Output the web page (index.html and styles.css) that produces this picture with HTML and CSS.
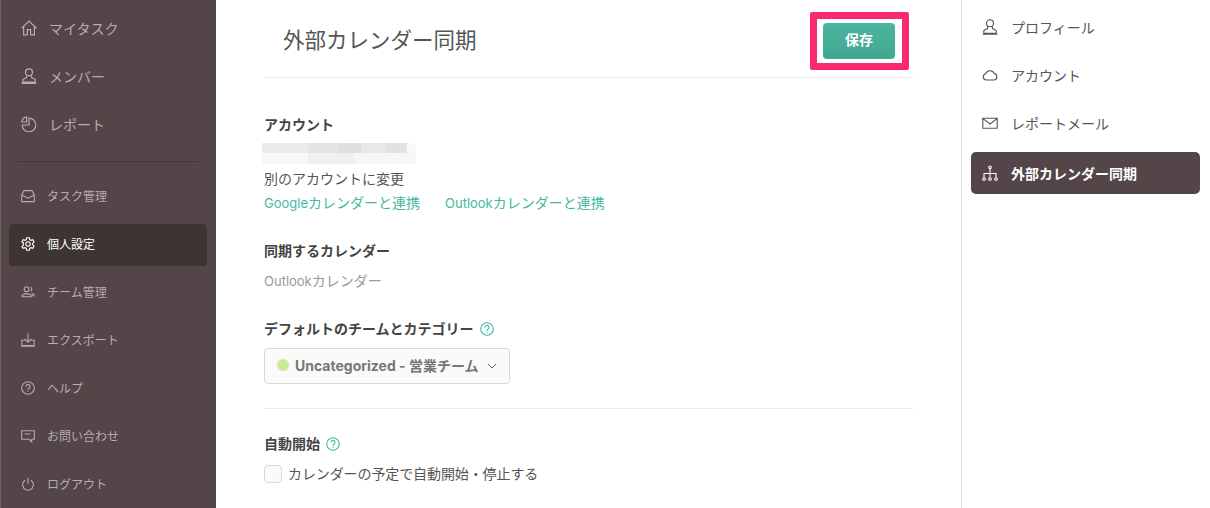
FILE: index.html
```html
<!DOCTYPE html>
<html lang="ja">
<head>
<meta charset="utf-8">
<title>外部カレンダー同期</title>
<link rel="stylesheet" href="styles.css">
</head>
<body>
<div class="app">
  <nav class="sidebar">
    <ul class="nav-main">
      <li class="nav-item"><svg class="ico-l" viewBox="0 0 16 16"><path d="M.6 8.300 8 1l7.400 7.300M2.600 6.800v8h3.800V9.600h3.200v5.200h3.800v-8"/></svg>マイタスク</li>
      <li class="nav-item"><svg class="ico-l" viewBox="0 0 16 16"><circle cx="8" cy="4.300" r="3.500"/><path d="M5.800 7.400 5.400 9.600 1.800 11.600v2.600h12.400v-2.600l-3.600-2-.4-2.200M.6 15.300h14.800"/></svg>メンバー</li>
      <li class="nav-item"><svg class="ico-l" viewBox="0 0 16 16"><path d="M8 2.200a6.800 6.800 0 1 1-6.800 6.800H8zM5.600.8A5.800 5.800 0 0 0 .8 6h4.800z"/></svg>レポート</li>
    </ul>
    <hr class="nav-rule">
    <ul class="nav-sub">
      <li class="sub-item"><svg class="ico-s" viewBox="0 0 14 14"><path d="M.7 6 3 1.600h8L13.300 6v6.600H.7zM.7 6 7 9.200 13.300 6"/></svg>タスク管理</li>
      <li class="sub-item active"><svg class="ico-s" viewBox="0 0 14 14"><circle cx="7" cy="7" r="2.200"/><path d="M5.700.8h2.600l.4 1.800 1.300.7 1.800-.6 1.300 2.300-1.400 1.200v1.600l1.400 1.200-1.300 2.300-1.800-.6-1.300.7-.4 1.800H5.700l-.4-1.800-1.300-.7-1.800.6L.9 9.700 2.300 8.500V5.500L.9 5l1.300-2.300 1.800.6 1.300-.7z"/></svg>個人設定</li>
      <li class="sub-item"><svg class="ico-s" viewBox="0 0 14 14"><circle cx="5.600" cy="4.200" r="2.400"/><path d="M1 11.800V10.300l2.700-1.400h3.800l2.700 1.400v1.500zM9.600 2.300a2.200 2.200 0 0 1 0 3.900M10.600 8.200l2.400 1.300v1.300h-2"/></svg>チーム管理</li>
      <li class="sub-item"><svg class="ico-s" viewBox="0 0 14 14"><path d="M7 .4v8.600M3.600 5.800 7 9.200l3.400-3.400M3.800 7.200H.8v6h12.400v-6h-3M.8 12.500h12.400"/></svg>エクスポート</li>
      <li class="sub-item"><svg class="ico-s" viewBox="0 0 14 14"><circle cx="7" cy="7" r="6.300"/><path d="M5 5.400a2 2 0 1 1 3.200 1.600C7.400 7.600 7 8 7 9M7 10v.9"/></svg>ヘルプ</li>
      <li class="sub-item"><svg class="ico-s" viewBox="0 0 14 14"><path d="M.7 1.700h12.600v8.600h-2.600v2.500l-2.500-2.500H.7zM3.500 5h6"/></svg>お問い合わせ</li>
      <li class="sub-item"><svg class="ico-s" viewBox="0 0 14 14"><path d="M4.200 3.200a5.400 5.400 0 1 0 5.600 0M7 .8v6"/></svg>ログアウト</li>
    </ul>
  </nav>

  <main class="main">
    <header class="page-head">
      <h1 class="page-title">外部カレンダー同期</h1>
      <button class="save-btn">保存</button>
      <span class="annot"></span>
    </header>

    <section class="block-account">
      <h2 class="label">アカウント</h2>
      <div class="blur"></div>
      <p class="line">別のアカウントに変更</p>
      <p class="links"><a class="link"><span class="lat">Google</span>カレンダーと連携</a><a class="link"><span class="lat">Outlook</span>カレンダーと連携</a></p>
    </section>

    <section class="block-cal">
      <h2 class="label">同期するカレンダー</h2>
      <p class="muted"><span class="lat">Outlook</span>カレンダー</p>
    </section>

    <section class="block-default">
      <h2 class="label">デフォルトのチームとカテゴリー<svg class="help" viewBox="0 0 14 14"><circle cx="7" cy="7" r="6.300"/><path d="M5 5.400a2 2 0 1 1 3.200 1.600C7.400 7.600 7 8 7 9M7 10v.9"/></svg></h2>
      <div class="select"><span class="dot"></span><span class="select-text">Uncategorized - 営業チーム</span><svg class="chev" viewBox="0 0 10 6"><path d="M.8.8 5 5 9.200.8"/></svg></div>
    </section>

    <hr class="rule">

    <section class="block-auto">
      <h2 class="label">自動開始<svg class="help" viewBox="0 0 14 14"><circle cx="7" cy="7" r="6.300"/><path d="M5 5.400a2 2 0 1 1 3.200 1.600C7.400 7.600 7 8 7 9M7 10v.9"/></svg></h2>
      <label class="check"><span class="box"></span><span class="check-text">カレンダーの予定で自動開始・停止する</span></label>
    </section>
  </main>

  <aside class="side">
    <ul class="side-list">
      <li class="side-item"><svg class="ico-r" viewBox="0 0 16 16"><circle cx="8" cy="4.300" r="3.500"/><path d="M5.800 7.400 5.400 9.600 1.800 11.600v2.600h12.400v-2.600l-3.600-2-.4-2.200M.6 15.300h14.800"/></svg>プロフィール</li>
      <li class="side-item"><svg class="ico-r" viewBox="0 0 16 16"><path d="M4.300 13A3.200 3.200 0 0 1 3.700 6.700 4.600 4.600 0 0 1 12.300 6.600 3.250 3.250 0 0 1 12 13z"/></svg>アカウント</li>
      <li class="side-item"><svg class="ico-r" viewBox="0 0 16 16"><path d="M.8 3.200h14.400v10H.8zM1 3.600 8 9l7-5.400"/></svg>レポートメール</li>
      <li class="side-item current"><svg class="ico-r" viewBox="0 0 16 16"><circle cx="8" cy="2.300" r="1.300"/><circle cx="2" cy="14" r="1.300"/><circle cx="8" cy="14" r="1.300"/><circle cx="14" cy="14" r="1.300"/><path d="M8 3.600v8.900M2 12.700V8.500h12v4.200"/></svg>外部カレンダー同期</li>
    </ul>
  </aside>
</div>
</body>
</html>
```

FILE: styles.css
```css
* { box-sizing: border-box; }
html, body { margin: 0; padding: 0; height: 100%; overflow: hidden; }
body {
  font-family: Inter, "Noto Sans CJK JP", sans-serif;
  color: #4a4a4a;
  background: #fff;
}
ul { list-style: none; margin: 0; padding: 0; }
p, h1, h2 { margin: 0; }

.app { display: flex; width: 1210px; height: 508px; }

/* left sidebar */
.sidebar {
  width: 216px;
  flex: none;
  background: #534548;
  border-left: 1px solid #6d6063;
  color: #b5adae;
  padding-top: 4px;
}
.nav-item {
  display: flex;
  align-items: center;
  height: 48px;
  padding-left: 20px;
  font-size: 14px;
}
.ico-l, .ico-s, .ico-r, .help, .chev {
  fill: none;
  stroke: currentColor;
  flex: none;
}
.ico-l { width: 16px; height: 16px; margin-right: 12px; stroke-width: 1.200; }
.nav-rule {
  margin: 13px 17px 14px 17px;
  border: 0;
  border-top: 1px solid #443739;
}
.nav-sub { padding: 0 8px; }
.sub-item {
  display: flex;
  align-items: center;
  width: 198px;
  height: 42px;
  margin-bottom: 6px;
  padding: 0 0 3px 12px;
  font-size: 12px;
  border-radius: 4px;
}
.sub-item.active { background: #3e3432; color: #fff; }
.ico-s { width: 14px; height: 14px; margin-right: 12px; stroke-width: 1.100; }

/* main */
.main {
  width: 745px;
  flex: none;
  padding: 0 48px;
  font-size: 14px;
}
.lat { font-size: 13px; }
.page-head {
  position: relative;
  display: flex;
  align-items: center;
  justify-content: space-between;
  height: 78px;
  padding: 0 18px 0 19px;
  border-bottom: 1px solid #ebebeb;
}
.page-title { font-size: 21.500px; font-weight: 400; color: #555; line-height: 1; margin-top: 5px; }
.save-btn {
  width: 72px;
  height: 36px;
  margin-top: 4px;
  padding: 0 0 3px;
  border: 0;
  border-radius: 4px;
  background: linear-gradient(#4cb59f, #41a68f);
  color: #fff;
  font: 700 14px Inter, "Noto Sans CJK JP", sans-serif;
}
.annot {
  position: absolute;
  left: 546px;
  top: 12px;
  width: 99px;
  height: 58px;
  border: 7px solid #fb2a6e;
  border-radius: 2px;
}
.label {
  display: flex;
  align-items: center;
  font-size: 14px;
  line-height: 20px;
  font-weight: 700;
  color: #444;
}
.block-account { padding-top: 37px; }
.blur {
  width: 154px;
  height: 21px;
  margin: 8px 0 4px -2px;
  background:
    linear-gradient(90deg, #ebebeb 0 30%, #e4e4e4 30% 50%, #dfdfdf 50% 64%, #e8e8e8 64% 80%, #e2e2e2 80% 94%, #fafafa 94%) 0 0 / 100% 10px no-repeat,
    linear-gradient(90deg, #f8f8f8 0 30%, #f0f0f0 30% 60%, #f6f6f6 60% 100%) 0 10px / 100% 11px no-repeat;
}
.line { line-height: 20px; color: #555; margin-top: 5px; }
.links { line-height: 20px; margin-top: 4px; }
.link { color: #46b8a0; margin-right: 25px; }
.block-cal { padding-top: 28px; }
.muted { color: #999; line-height: 20px; margin-top: 10px; }
.block-default { padding-top: 28px; }
.help { width: 14px; height: 14px; margin-left: 6px; color: #46b8a0; stroke-width: 1.100; }
.select {
  display: flex;
  align-items: center;
  width: 246px;
  height: 36px;
  margin-top: 9px;
  padding: 0 0 2px 12px;
  border: 1px solid #d9d9d9;
  border-radius: 4px;
  background: #fafafa;
}
.dot { width: 12px; height: 12px; border-radius: 50%; background: #c9eb9c; margin-right: 6px; }
.select-text { font-weight: 700; color: #777; }
.chev { width: 10px; height: 6px; margin: 2px 0 0 8px; color: #666; stroke-width: 1; }
.rule { margin: 24px 0 0; border: 0; border-top: 1px solid #ebebeb; }
.block-auto { padding-top: 25px; }
.check { display: flex; align-items: center; margin-top: 10px; line-height: 20px; color: #555; }
.check-text { letter-spacing: -.1px; }
.box {
  width: 18px;
  height: 18px;
  margin-right: 6px;
  border: 1px solid #d9d9d9;
  border-radius: 4px;
  background: #fafafa;
}

/* right panel */
.side {
  flex: 1;
  border-left: 1px solid #d9d9d9;
  padding: 3px 10px 0 9px;
}
.side-item {
  display: flex;
  align-items: center;
  height: 48px;
  padding-left: 11px;
  font-size: 14px;
  color: #555;
}
.side-item.current {
  height: 42px;
  margin-top: 5px;
  padding-bottom: 1px;
  background: #534548;
  border-radius: 5px;
  color: #fff;
  font-weight: 700;
}
.ico-r { width: 16px; height: 16px; margin-right: 13px; stroke-width: 1.100; }
```
